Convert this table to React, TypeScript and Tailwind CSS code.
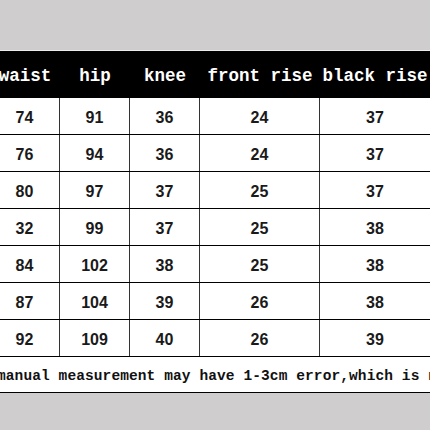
import React from 'react';

const headers = ['waist', 'hip', 'knee', 'front rise', 'black rise'];

const rows: number[][] = [
  [74, 91, 36, 24, 37],
  [76, 94, 36, 24, 37],
  [80, 97, 37, 25, 37],
  [32, 99, 37, 25, 38],
  [84, 102, 38, 25, 38],
  [87, 104, 39, 26, 38],
  [92, 109, 40, 26, 39],
];

const App: React.FC = () => {
  return (
    <div className="w-[430px] h-[430px] overflow-hidden bg-[#cfcdce] flex flex-col">
      {/* top gray band */}
      <div className="h-[51px] shrink-0 border-b border-[#ececec]" />

      {/* size table */}
      <div className="bg-white shrink-0">
        <div className="-ml-[10px] w-[440px]">
          <div className="grid grid-cols-[70px_70px_70px_120px_110px] h-[47px] bg-black text-white font-bold text-[17.5px] font-['Liberation_Mono',monospace]">
            {headers.map(h => (
              <div key={h} className="flex items-center justify-center whitespace-nowrap pt-[4px]">
                {h}
              </div>
            ))}
          </div>

          {rows.map((row, i) => (
            <div
              key={i}
              className="grid grid-cols-[70px_70px_70px_120px_110px] h-[37px] border-b border-black font-['Liberation_Sans',Arial,sans-serif] font-bold text-[16px] text-[#1a1a1a]"
            >
              {row.map((v, j) => (
                <div
                  key={j}
                  className={`flex items-center justify-center pt-[3px] ${j < 4 ? 'border-r border-[#333]' : ''}`}
                >
                  {v}
                </div>
              ))}
            </div>
          ))}
        </div>

        {/* note */}
        <div className="h-[36px] border-b border-black flex items-center pt-[5px] overflow-hidden">
          <p className="-ml-[3px] whitespace-nowrap font-['Liberation_Mono',monospace] font-bold text-[14.5px] tracking-[0.1px] text-[#111]">
            manual measurement may have 1-3cm error,which is normal.
          </p>
        </div>
      </div>

      <div className="flex-1" />
    </div>
  );
};

export default App;
